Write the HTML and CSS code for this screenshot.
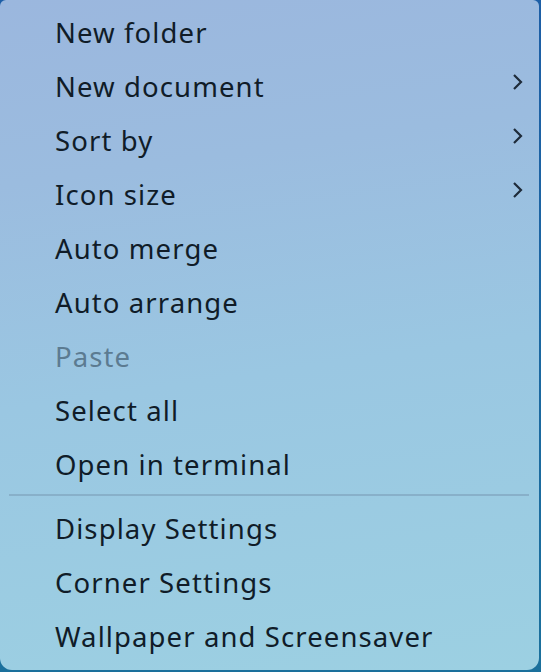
FILE: index.html
```html
<!DOCTYPE html>
<html lang="en">
<head>
<meta charset="utf-8">
<title>Desktop context menu</title>
<link rel="stylesheet" href="styles.css">
</head>
<body>
<div class="menu">
  <div class="item">New folder</div>
  <div class="item sub">New document<svg class="chev" viewBox="0 0 12 18"><path d="M3 2 L10 9 L3 16"/></svg></div>
  <div class="item sub">Sort by<svg class="chev" viewBox="0 0 12 18"><path d="M3 2 L10 9 L3 16"/></svg></div>
  <div class="item sub">Icon size<svg class="chev" viewBox="0 0 12 18"><path d="M3 2 L10 9 L3 16"/></svg></div>
  <div class="item">Auto merge</div>
  <div class="item">Auto arrange</div>
  <div class="item disabled">Paste</div>
  <div class="item">Select all</div>
  <div class="item">Open in terminal</div>
  <div class="sep"></div>
  <div class="item">Display Settings</div>
  <div class="item">Corner Settings</div>
  <div class="item">Wallpaper and Screensaver</div>
</div>
</body>
</html>
```
FILE: styles.css
```css
html, body {
  margin: 0;
  padding: 0;
  height: 100%;
}
body {
  background: linear-gradient(180deg, #1d5ea6 0%, #1a709c 100%);
  font-family: "Noto Sans", "DejaVu Sans", sans-serif;
}
.menu {
  width: 539px;
  height: 670px;
  box-sizing: border-box;
  padding: 5px 0 7px;
  border-radius: 6px 6px 12px 12px;
  background: linear-gradient(172deg, #9bb7de 0%, #9bbcdf 25%, #9ac7e2 55%, #9cd0e2 100%);
  display: flex;
  flex-direction: column;
}
.item {
  height: 54px;
  display: flex;
  align-items: center;
  padding-left: 55px;
  padding-right: 16px;
  font-size: 27.5px;
  color: #101c28;
  letter-spacing: 1.1px;
}
.item.sub {
  justify-content: space-between;
}
.item.disabled {
  color: #5c7b91;
}
.chev {
  flex: none;
  width: 12px;
  height: 18px;
  margin-top: -8px;
  fill: none;
  stroke: #1e2b3a;
  stroke-width: 2.2;
}
.sep {
  height: 10px;
  display: flex;
  align-items: flex-start;
  padding: 3px 10px 0 9px;
  box-sizing: border-box;
}
.sep::before {
  content: "";
  flex: 1;
  height: 2px;
  background: #88b0c9;
}
```
